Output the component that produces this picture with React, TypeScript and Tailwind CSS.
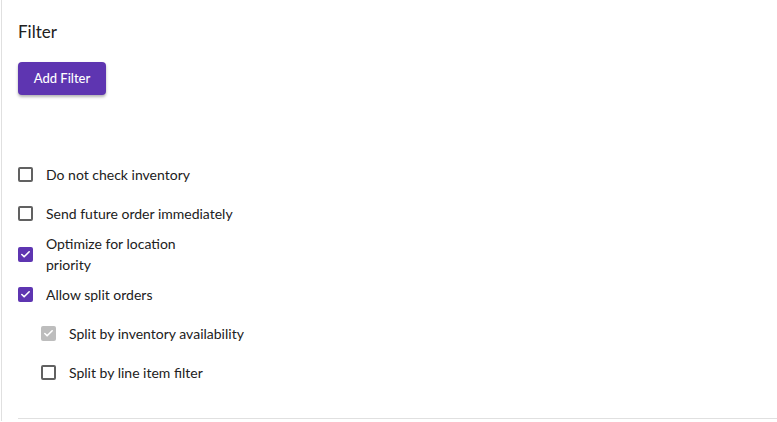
import { Check } from 'lucide-react'

interface Option {
  label: string
  checked: boolean
  disabled?: boolean
  nested?: boolean
  wrap?: boolean
}

const options: Option[] = [
  { label: 'Do not check inventory', checked: false },
  { label: 'Send future order immediately', checked: false },
  { label: 'Optimize for location priority', checked: true, wrap: true },
  { label: 'Allow split orders', checked: true },
  { label: 'Split by inventory availability', checked: true, disabled: true, nested: true },
  { label: 'Split by line item filter', checked: false, nested: true },
]

function Box({ checked, disabled }: { checked: boolean; disabled?: boolean }) {
  if (!checked) {
    return <span className="size-[15px] shrink-0 rounded-[2px] border-2 border-[#616161] bg-white" />
  }
  return (
    <span
      className={`size-[15px] shrink-0 rounded-[2px] flex items-center justify-center ${
        disabled ? 'bg-[#bdbdbd]' : 'bg-[#5e35b1]'
      }`}
    >
      <Check className="size-[11px] text-white" strokeWidth={3.5} />
    </span>
  )
}

export default function App() {
  return (
    <div className="h-[422px] w-[777px] overflow-hidden bg-white font-['Lato',sans-serif] text-[#212121]">
      <div className="h-[421px] border-l border-[#e0e0e0] ml-px pl-[16px] flex flex-col">
        {/* description line, scrolled mostly out of view */}
        <p className="-mt-[17px] text-[14px] leading-[20px] text-[#616161]">Select a process for routing</p>

        <h2 className="mt-[17px] text-[17px] leading-[24px]">Filter</h2>

        <button className="mt-[18px] w-[88px] h-[33px] rounded-[4px] bg-[#5e35b1] text-white text-[13px] font-medium shadow-[0_2px_3px_rgba(0,0,0,0.3)]">
          Add Filter
        </button>

        {/* Options */}
        <div className="mt-[60px] flex flex-col">
          {options.map((opt, i) => (
            <label
              key={i}
              className={`flex items-center gap-[13px] ${opt.nested ? 'pl-[23px]' : ''} ${
                opt.wrap ? 'h-[42px]' : 'h-[39px]'
              }`}
            >
              <Box checked={opt.checked} disabled={opt.disabled} />
              <span className={`text-[14px] ${opt.wrap ? 'w-[140px] leading-[21px]' : 'leading-[20px]'}`}>
                {opt.label}
              </span>
            </label>
          ))}
        </div>

        <div className="mt-[26px] h-px bg-[#e0e0e0]" />
      </div>
    </div>
  )
}
